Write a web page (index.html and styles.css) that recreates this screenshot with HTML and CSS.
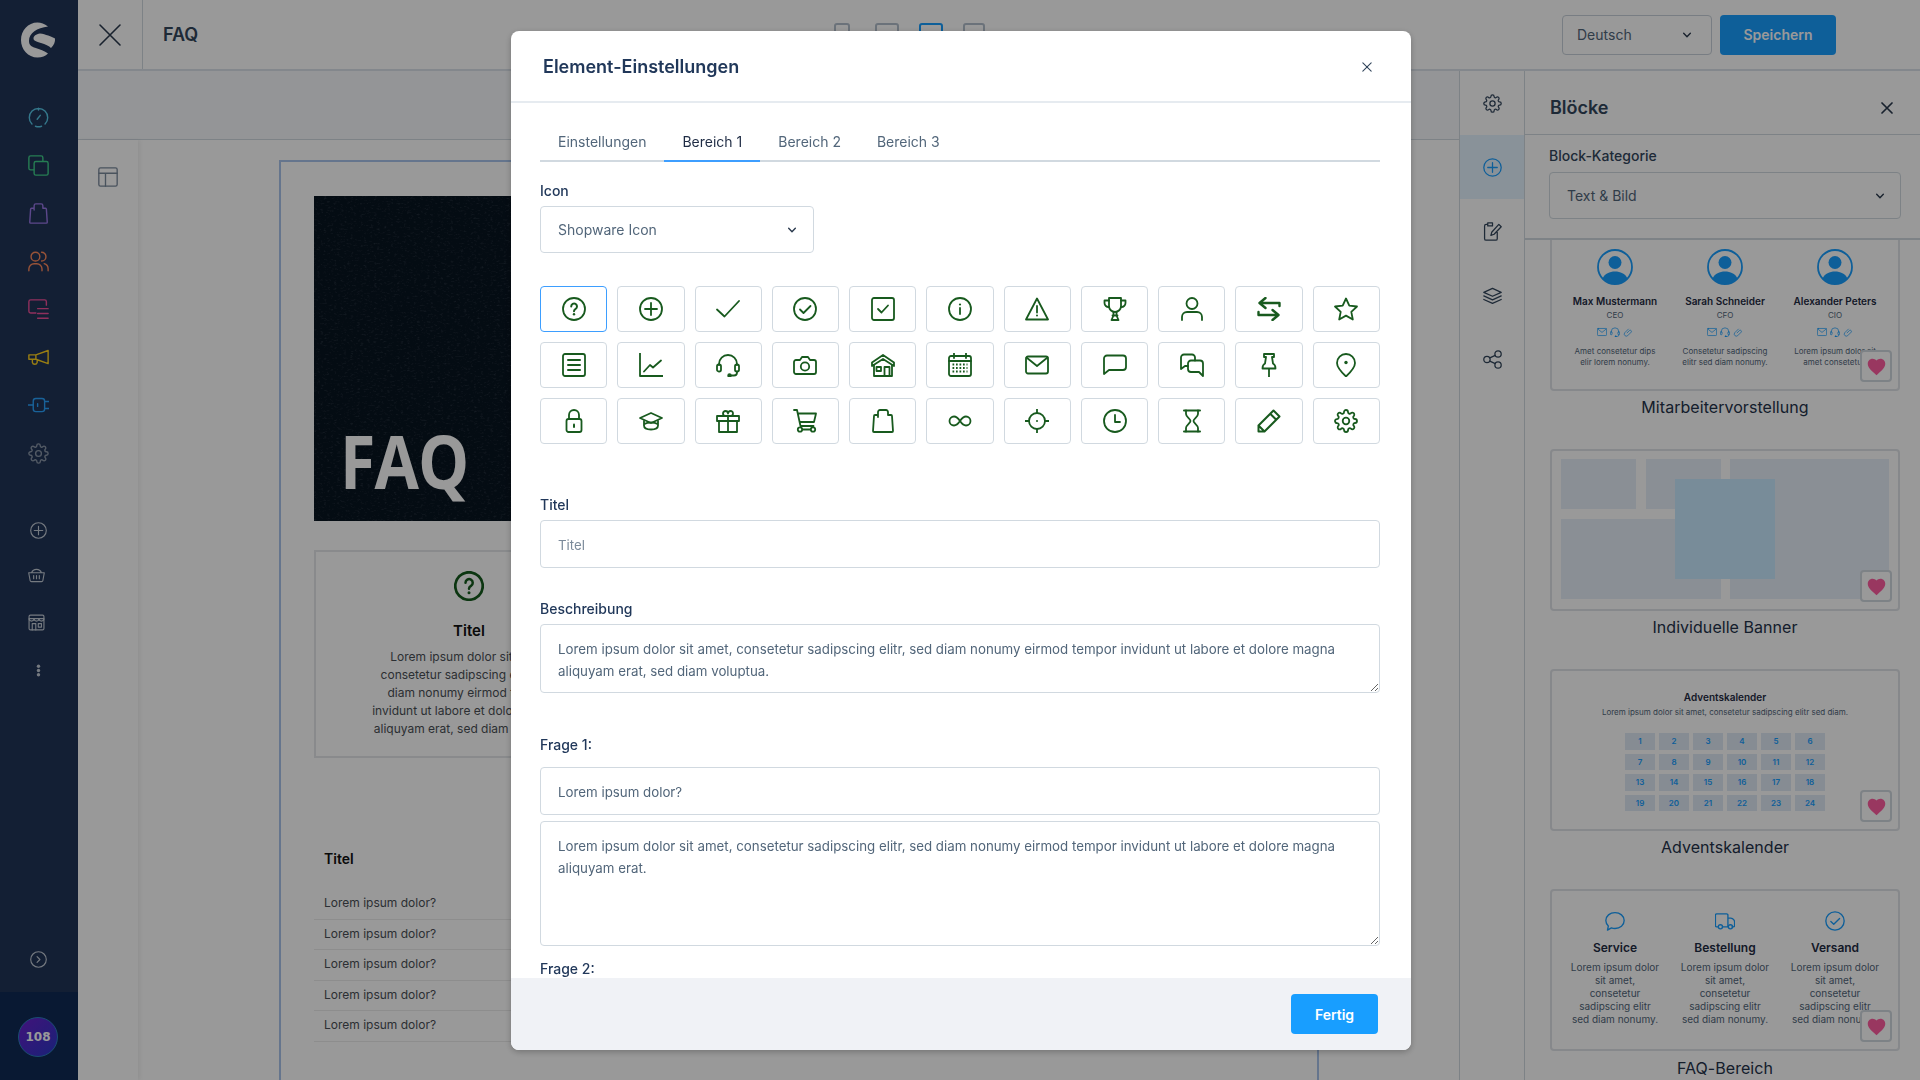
FILE: index.html
```html
<!doctype html>
<html lang="de">
<head>
<meta charset="utf-8">
<title>FAQ</title>
<link rel="stylesheet" href="styles.css">
</head>
<body>

<svg class="sprite" xmlns="http://www.w3.org/2000/svg">
	<symbol id="i-help" viewBox="0 0 24 24"><circle cx="12" cy="12" r="11"/><path stroke-width="2" d="M9.2 9.4a2.9 2.9 0 1 1 4.4 2.5c-1 .6-1.6 1.1-1.6 2.3"/><circle cx="12" cy="17.3" r="1.2" fill="currentColor" stroke="none"/></symbol>
	<symbol id="i-plus" viewBox="0 0 24 24"><circle cx="12" cy="12" r="11"/><path d="M12 6v12M6 12h12"/></symbol>
	<symbol id="i-check" viewBox="0 0 24 24"><path d="M1 12.5l7.5 7L23 4"/></symbol>
	<symbol id="i-check-circle" viewBox="0 0 24 24"><circle cx="12" cy="12" r="11"/><path d="M7 12.5l3.5 3.5L17.5 9"/></symbol>
	<symbol id="i-check-box" viewBox="0 0 24 24"><rect x="1" y="1" width="22" height="22" rx="2"/><path d="M7 12l3.5 3.5L17 8.5"/></symbol>
	<symbol id="i-info" viewBox="0 0 24 24"><circle cx="12" cy="12" r="11"/><path d="M12 11v6"/><circle cx="12" cy="7.5" r="1.1" fill="currentColor" stroke="none"/></symbol>
	<symbol id="i-warn" viewBox="0 0 24 24"><path d="M12 1.5L23 22.5H1z"/><path d="M12 9v6.5"/><circle cx="12" cy="18.5" r="1" fill="currentColor" stroke="none"/></symbol>
	<symbol id="i-trophy" viewBox="0 0 24 24"><path d="M6 1h12v8a6 6 0 0 1-12 0z"/><path d="M6 3.5H1.5V6a4 4 0 0 0 4.5 4M18 3.5h4.5V6a4 4 0 0 1-4.5 4"/><path d="M10.5 15v3.5L8.5 23h7l-2-4.5V15M9.500 18.500h5"/></symbol>
	<symbol id="i-user" viewBox="0 0 24 24"><circle cx="12" cy="6.5" r="5.500"/><path d="M2 23v-3a5 5 0 0 1 5-5h10a5 5 0 0 1 5 5v3"/></symbol>
	<symbol id="i-swap" viewBox="0 0 24 24"><path stroke-width="2.4" d="M22.5 9V6H3M8.5 1 2.5 6l6 5M1.5 15v3h19.5M15.5 13l6 5-6 5"/></symbol>
	<symbol id="i-star" viewBox="0 0 24 24"><path d="M12 1.500l3.300 7.100 7.700.9-5.700 5.300 1.500 7.700-6.800-3.900-6.800 3.900 1.500-7.700L1 9.500l7.700-.9z"/></symbol>
	<symbol id="i-text" viewBox="0 0 24 24"><rect x="1" y="1" width="22" height="22" rx="2"/><path stroke-width="2" d="M6 7h12M6 12h12M6 17h12"/></symbol>
	<symbol id="i-chart" viewBox="0 0 24 24"><path d="M1 0v23h23M5 18.500l6-6.500 3 2.500 8-7"/></symbol>
	<symbol id="i-headset" viewBox="0 0 24 24"><path d="M3 12v-1a9 9 0 0 1 18 0v1"/><rect x="1" y="11.500" width="4" height="7" rx="1.800"/><rect x="19" y="11.500" width="4" height="7" rx="1.800"/><path d="M21 18.500v1a3 3 0 0 1-3 3h-4"/><circle cx="13.500" cy="22.500" r="1.300" fill="currentColor"/></symbol>
	<symbol id="i-camera" viewBox="0 0 24 24"><path d="M1 9a2 2 0 0 1 2-2h4l2-3h6l2 3h4a2 2 0 0 1 2 2v10a2 2 0 0 1-2 2H3a2 2 0 0 1-2-2z"/><circle cx="12" cy="13.500" r="4.200"/></symbol>
	<symbol id="i-home" viewBox="0 0 24 24"><path d="M1 13V9.500L12 2l11 7.500V13L12 6z"/><path d="M3 12v11h18V12M13.500 23v-9h5v9"/><rect x="5.500" y="14" width="4.500" height="4"/></symbol>
	<symbol id="i-calendar" viewBox="0 0 24 24"><rect x="1" y="3" width="22" height="20" rx="2"/><path d="M1 8h22M6 0v5M18 0v5"/><path stroke-linecap="butt" stroke-dasharray="1.700 1.800" d="M4.500 11.500h15M4.500 15h15M4.500 18.500h15"/></symbol>
	<symbol id="i-mail" viewBox="0 0 24 24"><rect x="1" y="3.500" width="22" height="17" rx="2"/><path d="M1.500 4.500L12 13l10.500-8.500"/></symbol>
	<symbol id="i-chat" viewBox="0 0 24 24"><path d="M4 2.500h16a3 3 0 0 1 3 3V14a3 3 0 0 1-3 3H6l-5 4V5.500a3 3 0 0 1 3-3z"/></symbol>
	<symbol id="i-chats" viewBox="0 0 24 24"><path d="M15 7.500V4.500A3 3 0 0 0 12 1.500H4a3 3 0 0 0-3 3V16l4-3h3"/><path d="M11 7.500h9a3 3 0 0 1 3 3V23l-4-4h-8a3 3 0 0 1-3-3v-5.500a3 3 0 0 1 3-3z"/></symbol>
	<symbol id="i-pin" viewBox="0 0 24 24"><path d="M7 1h10v3h-2l1 6.500c2 1 2.500 2.500 2.500 5h-13c0-2.500.5-4 2.500-5L9 4H7zM12 15.500V24"/></symbol>
	<symbol id="i-marker" viewBox="0 0 24 24"><path d="M12 1a9 9 0 0 1 9 9c0 5-9 13.500-9 13.500S3 15 3 10a9 9 0 0 1 9-9z"/><circle cx="12" cy="9.500" r="1.700" fill="currentColor" stroke="none"/></symbol>
	<symbol id="i-lock" viewBox="0 0 24 24"><rect x="4.500" y="10" width="15" height="13" rx="2"/><path d="M7 10V6a5 5 0 0 1 10 0v4"/><path stroke-width="2" d="M12 15.500v2.500"/></symbol>
	<symbol id="i-grad" viewBox="0 0 24 24"><path d="M1 9l11-5 11 5-11 5z"/><path d="M5 12v4.500c0 2.500 3 4 7 4s7-1.500 7-4V12M5.500 15c1.500-1 4-1.500 6.500-1.500s5 .5 6.500 1.500"/></symbol>
	<symbol id="i-gift" viewBox="0 0 24 24"><rect x="1" y="7" width="22" height="5"/><path d="M3 12v11h18V12M12 7v16"/><path d="M12 7H9.500a2.500 2.500 0 1 1 2.500-2.500 2.500 2.500 0 1 1 2.500 2.500z"/></symbol>
	<symbol id="i-cart" viewBox="0 0 24 24"><path d="M1 1h3l3.500 16h13M5 4.500h18l-2 8.500H6.500"/><circle cx="7" cy="20.500" r="2.200"/><circle cx="20" cy="20.500" r="2.200"/><path d="M9.500 20.500h8"/></symbol>
	<symbol id="i-bag" viewBox="0 0 24 24"><path d="M7 6H4a1 1 0 0 0-1 1L2 22a1 1 0 0 0 1 1h18a1 1 0 0 0 1-1L21 7a1 1 0 0 0-1-1h-3V3a2 2 0 0 0-2-2H9a2 2 0 0 0-2 2v5"/></symbol>
	<symbol id="i-infinity" viewBox="0 0 24 24"><path d="M12 12c-2-3-3.800-4.500-6-4.500a4.500 4.500 0 0 0 0 9c2.200 0 4-1.500 6-4.500s3.800-4.500 6-4.500a4.500 4.500 0 0 1 0 9c-2.200 0-4-1.500-6-4.500z"/></symbol>
	<symbol id="i-target" viewBox="0 0 24 24"><circle cx="12" cy="12" r="8"/><path d="M12 0v4M12 20v4M0 12h4M20 12h4"/><circle cx="12" cy="12" r="1" fill="currentColor" stroke="none"/></symbol>
	<symbol id="i-clock" viewBox="0 0 24 24"><circle cx="12" cy="12" r="11"/><path d="M12 6v7h5"/></symbol>
	<symbol id="i-hour" viewBox="0 0 24 24"><path stroke-width="2" d="M4 1.500h16M4 22.500h16"/><path d="M6 1.500V5c0 3 4.500 5 4.500 7S6 16 6 19v3.500M18 1.500V5c0 3-4.500 5-4.500 7s4.500 4 4.500 7v3.500"/></symbol>
	<symbol id="i-pencil" viewBox="0 0 24 24"><path stroke-width="2" d="M1.500 16.500L16.500 1.500l6 6-15 15h-6zM13.500 5l5.500 5.500M1.500 16.500l6 6"/></symbol>
	<symbol id="i-gear" viewBox="0 0 24 24"><circle cx="12" cy="12" r="3.300"/><path d="M19.400 15a1.650 1.650 0 0 0 .33 1.820l.06.06a2 2 0 0 1 0 2.830 2 2 0 0 1-2.830 0l-.06-.06a1.650 1.650 0 0 0-1.820-.33 1.650 1.650 0 0 0-1 1.510V21a2 2 0 0 1-2 2 2 2 0 0 1-2-2v-.09A1.650 1.650 0 0 0 9 19.400a1.650 1.650 0 0 0-1.820.33l-.06.06a2 2 0 0 1-2.830 0 2 2 0 0 1 0-2.830l.06-.06a1.650 1.650 0 0 0 .33-1.820 1.650 1.650 0 0 0-1.510-1H3a2 2 0 0 1-2-2 2 2 0 0 1 2-2h.09A1.650 1.650 0 0 0 4.600 9a1.650 1.650 0 0 0-.33-1.820l-.06-.06a2 2 0 0 1 0-2.830 2 2 0 0 1 2.830 0l.06.06a1.650 1.650 0 0 0 1.820.33H9a1.650 1.650 0 0 0 1-1.510V3a2 2 0 0 1 2-2 2 2 0 0 1 2 2v.09a1.650 1.650 0 0 0 1 1.510 1.650 1.650 0 0 0 1.820-.33l.06-.06a2 2 0 0 1 2.830 0 2 2 0 0 1 0 2.830l-.06.06a1.650 1.650 0 0 0-.33 1.820V9a1.650 1.650 0 0 0 1.510 1H21a2 2 0 0 1 2 2 2 2 0 0 1-2 2h-.09a1.650 1.650 0 0 0-1.510 1z"/></symbol>
	<symbol id="i-close" viewBox="0 0 24 24"><path d="M2 2l20 20M22 2L2 22"/></symbol>
	<symbol id="i-chevron" viewBox="0 0 12 12"><path d="M2 4l4 4 4-4"/></symbol>

	<symbol id="i-gauge" viewBox="0 0 24 24"><path d="M4.500 19.500a10.500 10.500 0 1 1 15 0M8.500 22a10.500 10.500 0 0 0 7 0M10.500 14l3.500-4.500M12 1.500v2"/></symbol>
	<symbol id="i-boxes" viewBox="0 0 24 24"><rect x="1" y="1" width="16" height="16" rx="2"/><rect x="7" y="7.500" width="16" height="15.500" rx="2" fill="#213458"/></symbol>
	<symbol id="i-users" viewBox="0 0 24 24"><circle cx="8.500" cy="6.500" r="5"/><path d="M1 22.500v-2a6 6 0 0 1 6-6h3a6 6 0 0 1 6 6v2M15.500 1.500a5 5 0 0 1 0 10M18.500 14.500c2.800.8 4.500 3 4.500 6v2"/></symbol>
	<symbol id="i-orders" viewBox="0 0 24 24"><path d="M21 7V3a2 2 0 0 0-2-2H3a2 2 0 0 0-2 2v11a2 2 0 0 0 2 2h6M11 11h12M11 16.500h12M11 22h12"/></symbol>
	<symbol id="i-mega" viewBox="0 0 24 24"><path d="M1 9h8l14-5v15L9 14H1zM9 9v5M5 14v3.500a2.800 2.800 0 0 0 5.500 0V15"/></symbol>
	<symbol id="i-plug" viewBox="0 0 24 24"><rect x="6" y="4" width="13" height="15" rx="3"/><path d="M0 11.500h6M19 7.500h5M19 15.500h5M11 10v3"/></symbol>
	<symbol id="i-basket" viewBox="0 0 24 24"><path d="M1 9.500h22l-2 11a2 2 0 0 1-2 1.500H5a2 2 0 0 1-2-1.500zM5 9.500a7.500 7.500 0 0 1 14 0M8 13.500v4.500M12 13.500v4.500M16 13.500v4.500"/></symbol>
	<symbol id="i-store" viewBox="0 0 24 24"><rect x="1.500" y="1.500" width="21" height="21" rx="2"/><path d="M1.500 6.500h21M1.500 6.500a3.500 3.500 0 0 0 7 0 3.500 3.500 0 0 0 7 0 3.500 3.500 0 0 0 7 0M6 22.500v-9h5v9M14.500 13.500h4.500v5h-4.500z"/></symbol>
	<symbol id="i-dots" viewBox="0 0 24 24"><circle cx="12" cy="6" r="2.400" fill="currentColor" stroke="none"/><circle cx="12" cy="12" r="2.400" fill="currentColor" stroke="none"/><circle cx="12" cy="18" r="2.400" fill="currentColor" stroke="none"/></symbol>
	<symbol id="i-arrow-circle" viewBox="0 0 24 24"><circle cx="12" cy="12" r="11"/><path d="M10 8l4 4-4 4"/></symbol>
	<symbol id="i-layout" viewBox="0 0 24 24"><rect x="1" y="1" width="22" height="22" rx="2"/><path d="M1 7.500h22M9 7.500V23"/></symbol>
	<symbol id="i-note" viewBox="0 0 24 24"><path d="M18 13v8a2 2 0 0 1-2 2H4a2 2 0 0 1-2-2V5a2 2 0 0 1 2-2h2M6 1h6v4H6zM10 17l1-4 9-10 3 3-9 9.500z"/></symbol>
	<symbol id="i-layers" viewBox="0 0 24 24"><path d="M12 3L1 8l11 5 11-5zM1 12.500l11 5 11-5M1 17l11 5 11-5"/></symbol>
	<symbol id="i-share" viewBox="0 0 24 24"><circle cx="5" cy="12" r="4"/><circle cx="19" cy="5" r="4"/><circle cx="19" cy="19" r="4"/><path d="M8.500 10l7-3.200M8.500 14l7 3.200"/></symbol>
	<symbol id="i-heart" viewBox="0 0 24 24"><path fill="currentColor" stroke="none" d="M12 22l-1.500-1.400C5.400 16 2 12.800 2 8.800 2 5.600 4.400 3 7.500 3c1.700 0 3.400.8 4.500 2.200C13.100 3.800 14.800 3 16.500 3 19.600 3 22 5.600 22 8.800c0 4-3.400 7.200-8.500 11.800z"/></symbol>
	<symbol id="i-person" viewBox="0 0 36 36"><circle cx="18" cy="18" r="17" fill="none" stroke="currentColor" stroke-width="1.800"/><circle cx="18" cy="13.500" r="6.500" fill="currentColor" stroke="none"/><path fill="currentColor" stroke="none" d="M5.500 29.500C8 24.500 12.500 22.500 18 22.500s10 2 12.500 7C27.500 33 23 35 18 35S8.500 33 5.500 29.500z"/></symbol>
	<symbol id="i-link" viewBox="0 0 24 24"><path d="M10 14l6-6a3 3 0 0 1 4 4l-9 9a5 5 0 0 1-7-7l9-9"/></symbol>
	<symbol id="i-bubble" viewBox="0 0 24 24"><path d="M12 2c6.100 0 11 3.900 11 9.500S18.100 21 12 21c-1.500 0-3-.2-4.300-.7L3 23l1-5C2.200 16.300 1 14 1 11.500 1 5.900 5.900 2 12 2z"/></symbol>
	<symbol id="i-truck" viewBox="0 0 24 24"><path d="M4 19H2a1.500 1.500 0 0 1-1.500-1.500V5A1.500 1.500 0 0 1 2 3.500h12A1.500 1.500 0 0 1 15.500 5v14H9M15.500 8.500h3.500a5 5 0 0 1 4.500 5.500v3.500a1.500 1.500 0 0 1-1.500 1.500h-1.500M15 19h1"/><circle cx="6.500" cy="19" r="2.500"/><circle cx="18.500" cy="19" r="2.500"/></symbol>
</svg>

<div class="app">
	<nav class="nav">
		<div class="nav-top">
			<svg class="logo" viewBox="0 0 36 36"><path d="M28 4.500C24.500 1.800 21 .5 17.500.5 8 .5 1 8.500 1 18c0 9.500 7 17.500 16.500 17.500 4.500 0 8-1.500 10.500-4-3.500-2.500-8-4.200-13-5.700-4.500-1.400-6-3.300-6-7 0-8 8-12.800 19-14.300z"/><path d="M20 11.500c-4 .5-6.500 2.500-6.500 5 0 2.300 2.800 3 7.500 4.500 4.200 1.300 8.200 3 10 5 3-2.700 4.300-6 4-9.500-3.500-1.800-9.500-4.300-15-5z"/></svg>
			<svg class="nav-ic c-teal"><use href="#i-gauge"/></svg>
			<svg class="nav-ic c-green"><use href="#i-boxes"/></svg>
			<svg class="nav-ic c-purple"><use href="#i-bag"/></svg>
			<svg class="nav-ic c-orange"><use href="#i-users"/></svg>
			<svg class="nav-ic c-pink"><use href="#i-orders"/></svg>
			<svg class="nav-ic c-yellow"><use href="#i-mega"/></svg>
			<svg class="nav-ic c-blue"><use href="#i-plug"/></svg>
			<svg class="nav-ic c-gray"><use href="#i-gear"/></svg>
			<div class="nav-extra">
				<svg class="nav-sm"><use href="#i-plus"/></svg>
				<svg class="nav-sm nav-left"><use href="#i-basket"/></svg>
				<svg class="nav-sm nav-left"><use href="#i-store"/></svg>
				<svg class="nav-sm"><use href="#i-dots"/></svg>
			</div>
		</div>
		<div class="nav-collapse"><svg class="nav-sm"><use href="#i-arrow-circle"/></svg></div>
		<div class="nav-user"><div class="avatar">108</div></div>
	</nav>

	<div class="work">
		<header class="topbar">
			<div class="top-close"><svg class="ic ic-24"><use href="#i-close"/></svg></div>
			<div class="top-title">FAQ</div>
			<div class="devices">
				<span class="dev dev-a"></span>
				<span class="dev dev-b"></span>
				<span class="dev dev-c"></span>
				<span class="dev dev-d"></span>
			</div>
			<div class="top-select">Deutsch<svg class="chev"><use href="#i-chevron"/></svg></div>
			<div class="btn-save">Speichern</div>
		</header>

		<div class="body">
			<section class="editor">
				<div class="subbar"></div>
				<div class="stage">
					<div class="stage-rail"><svg class="ic ic-20"><use href="#i-layout"/></svg></div>
					<div class="canvas">
						<div class="page">
							<div class="hero">
								<svg class="hero-tex"><filter id="grain"><feTurbulence type="fractalNoise" baseFrequency="0.3 0.55" numOctaves="3" seed="4"/><feColorMatrix values="0 0 0 0 .5  0 0 0 0 .6  0 0 0 0 .7  1.1 0 0 0 -.6"/></filter><rect width="100%" height="100%" filter="url(#grain)" opacity=".35"/></svg>
								<span class="hero-text">FAQ</span>
							</div>
							<div class="info-card">
								<svg class="info-ic"><use href="#i-help"/></svg>
								<div class="info-title">Titel</div>
								<p class="info-text">Lorem ipsum dolor sit amet,<br>consetetur sadipscing elitr, sed<br>diam nonumy eirmod tempor<br>invidunt ut labore et dolore magna<br>aliquyam erat, sed diam voluptua.</p>
							</div>
							<div class="faq-list">
								<div class="faq-title">Titel</div>
								<div class="faq-row">Lorem ipsum dolor?</div>
								<div class="faq-row">Lorem ipsum dolor?</div>
								<div class="faq-row">Lorem ipsum dolor?</div>
								<div class="faq-row">Lorem ipsum dolor?</div>
								<div class="faq-row">Lorem ipsum dolor?</div>
							</div>
						</div>
					</div>
				</div>
			</section>

			<aside class="rail">
				<div class="rail-item"><svg class="ic ic-18"><use href="#i-gear"/></svg></div>
				<div class="rail-item is-active"><svg class="ic ic-18"><use href="#i-plus"/></svg></div>
				<div class="rail-item"><svg class="ic ic-18"><use href="#i-note"/></svg></div>
				<div class="rail-item"><svg class="ic ic-18"><use href="#i-layers"/></svg></div>
				<div class="rail-item"><svg class="ic ic-18"><use href="#i-share"/></svg></div>
			</aside>

			<aside class="panel">
				<div class="panel-head">
					<span class="panel-title">Blöcke</span>
					<svg class="panel-close"><use href="#i-close"/></svg>
				</div>
				<div class="panel-form">
					<div class="panel-label">Block-Kategorie</div>
					<div class="panel-select">Text &amp; Bild<svg class="chev"><use href="#i-chevron"/></svg></div>
				</div>
				<div class="blocks">
					<div class="block block-first">
						<div class="block-card team">
							<div class="member">
								<svg class="member-ic"><use href="#i-person"/></svg>
								<div class="member-name">Max Mustermann</div>
								<div class="member-role">CEO</div>
								<div class="member-links"><svg><use href="#i-mail"/></svg><svg><use href="#i-headset"/></svg><svg><use href="#i-link"/></svg></div>
								<p class="member-text">Amet consetetur dips<br>elir lorem nonumy.</p>
							</div>
							<div class="member">
								<svg class="member-ic"><use href="#i-person"/></svg>
								<div class="member-name">Sarah Schneider</div>
								<div class="member-role">CFO</div>
								<div class="member-links"><svg><use href="#i-mail"/></svg><svg><use href="#i-headset"/></svg><svg><use href="#i-link"/></svg></div>
								<p class="member-text">Consetetur sadipscing<br>elitr sed diam nonumy.</p>
							</div>
							<div class="member">
								<svg class="member-ic"><use href="#i-person"/></svg>
								<div class="member-name">Alexander Peters</div>
								<div class="member-role">CIO</div>
								<div class="member-links"><svg><use href="#i-mail"/></svg><svg><use href="#i-headset"/></svg><svg><use href="#i-link"/></svg></div>
								<p class="member-text">Lorem ipsum dolor sit<br>amet consetetur.</p>
							</div>
							<div class="fav"><svg><use href="#i-heart"/></svg></div>
						</div>
						<div class="block-name">Mitarbeitervorstellung</div>
					</div>

					<div class="block">
						<div class="block-card banners">
							<div class="banner-grid">
								<span class="banner"></span>
								<span class="banner"></span>
								<span class="banner banner-tall"></span>
								<span class="banner banner-wide"></span>
							</div>
							<span class="banner-top"></span>
							<div class="fav"><svg><use href="#i-heart"/></svg></div>
						</div>
						<div class="block-name">Individuelle Banner</div>
					</div>

					<div class="block">
						<div class="block-card advent">
							<div class="advent-title">Adventskalender</div>
							<div class="advent-sub">Lorem ipsum dolor sit amet, consetetur sadipscing elitr sed diam.</div>
							<div class="advent-grid">
								<span>1</span><span>2</span><span>3</span><span>4</span><span>5</span><span>6</span>
								<span>7</span><span>8</span><span>9</span><span>10</span><span>11</span><span>12</span>
								<span>13</span><span>14</span><span>15</span><span>16</span><span>17</span><span>18</span>
								<span>19</span><span>20</span><span>21</span><span>22</span><span>23</span><span>24</span>
							</div>
							<div class="fav"><svg><use href="#i-heart"/></svg></div>
						</div>
						<div class="block-name">Adventskalender</div>
					</div>

					<div class="block">
						<div class="block-card faqs">
							<div class="faq-col">
								<svg><use href="#i-bubble"/></svg>
								<div class="faq-col-title">Service</div>
								<p class="faq-col-text">Lorem ipsum dolor<br>sit amet,<br>consetetur<br>sadipscing elitr<br>sed diam nonumy.</p>
							</div>
							<div class="faq-col">
								<svg><use href="#i-truck"/></svg>
								<div class="faq-col-title">Bestellung</div>
								<p class="faq-col-text">Lorem ipsum dolor<br>sit amet,<br>consetetur<br>sadipscing elitr<br>sed diam nonumy.</p>
							</div>
							<div class="faq-col">
								<svg><use href="#i-check-circle"/></svg>
								<div class="faq-col-title">Versand</div>
								<p class="faq-col-text">Lorem ipsum dolor<br>sit amet,<br>consetetur<br>sadipscing elitr<br>sed diam nonumy.</p>
							</div>
							<div class="fav"><svg><use href="#i-heart"/></svg></div>
						</div>
						<div class="block-name block-name-last">FAQ-Bereich</div>
					</div>
				</div>
			</aside>
		</div>
	</div>
</div>

<div class="backdrop">
	<div class="modal">
		<div class="modal-head">
			<span class="modal-title">Element-Einstellungen</span>
			<svg class="modal-close"><use href="#i-close"/></svg>
		</div>
		<div class="modal-body">
			<div class="tabs">
				<span class="tab">Einstellungen</span>
				<span class="tab is-active">Bereich 1</span>
				<span class="tab">Bereich 2</span>
				<span class="tab">Bereich 3</span>
			</div>

			<label class="label label-icon">Icon</label>
			<div class="select">Shopware Icon<svg class="chev"><use href="#i-chevron"/></svg></div>

			<div class="icon-grid">
				<div class="icon-btn is-active"><svg><use href="#i-help"/></svg></div>
				<div class="icon-btn"><svg><use href="#i-plus"/></svg></div>
				<div class="icon-btn"><svg><use href="#i-check"/></svg></div>
				<div class="icon-btn"><svg><use href="#i-check-circle"/></svg></div>
				<div class="icon-btn"><svg><use href="#i-check-box"/></svg></div>
				<div class="icon-btn"><svg><use href="#i-info"/></svg></div>
				<div class="icon-btn"><svg><use href="#i-warn"/></svg></div>
				<div class="icon-btn"><svg><use href="#i-trophy"/></svg></div>
				<div class="icon-btn"><svg><use href="#i-user"/></svg></div>
				<div class="icon-btn"><svg><use href="#i-swap"/></svg></div>
				<div class="icon-btn"><svg><use href="#i-star"/></svg></div>

				<div class="icon-btn"><svg><use href="#i-text"/></svg></div>
				<div class="icon-btn"><svg><use href="#i-chart"/></svg></div>
				<div class="icon-btn"><svg><use href="#i-headset"/></svg></div>
				<div class="icon-btn"><svg><use href="#i-camera"/></svg></div>
				<div class="icon-btn"><svg><use href="#i-home"/></svg></div>
				<div class="icon-btn"><svg><use href="#i-calendar"/></svg></div>
				<div class="icon-btn"><svg><use href="#i-mail"/></svg></div>
				<div class="icon-btn"><svg><use href="#i-chat"/></svg></div>
				<div class="icon-btn"><svg><use href="#i-chats"/></svg></div>
				<div class="icon-btn"><svg><use href="#i-pin"/></svg></div>
				<div class="icon-btn"><svg><use href="#i-marker"/></svg></div>

				<div class="icon-btn"><svg><use href="#i-lock"/></svg></div>
				<div class="icon-btn"><svg><use href="#i-grad"/></svg></div>
				<div class="icon-btn"><svg><use href="#i-gift"/></svg></div>
				<div class="icon-btn"><svg><use href="#i-cart"/></svg></div>
				<div class="icon-btn"><svg><use href="#i-bag"/></svg></div>
				<div class="icon-btn"><svg><use href="#i-infinity"/></svg></div>
				<div class="icon-btn"><svg><use href="#i-target"/></svg></div>
				<div class="icon-btn"><svg><use href="#i-clock"/></svg></div>
				<div class="icon-btn"><svg><use href="#i-hour"/></svg></div>
				<div class="icon-btn"><svg><use href="#i-pencil"/></svg></div>
				<div class="icon-btn"><svg><use href="#i-gear"/></svg></div>
			</div>

			<label class="label label-titel">Titel</label>
			<input class="input" type="text" placeholder="Titel">

			<label class="label label-desc">Beschreibung</label>
			<textarea class="area area-desc">Lorem ipsum dolor sit amet, consetetur sadipscing elitr, sed diam nonumy eirmod tempor invidunt ut labore et dolore magna aliquyam erat, sed diam voluptua.</textarea>

			<label class="label label-q1">Frage 1:</label>
			<input class="input" type="text" value="Lorem ipsum dolor?">
			<textarea class="area area-answer">Lorem ipsum dolor sit amet, consetetur sadipscing elitr, sed diam nonumy eirmod tempor invidunt ut labore et dolore magna aliquyam erat.</textarea>

			<label class="label label-q2">Frage 2:</label>
		</div>
		<div class="modal-foot"><span class="btn-done">Fertig</span></div>
	</div>
</div>

</body>
</html>
```

FILE: styles.css
```css
* { box-sizing: border-box; margin: 0; padding: 0; }
html, body { height: 100%; overflow: hidden; }
body { font-family: Inter, "Noto Sans", sans-serif; font-size: 14px; color: #2b3a4e; background: #fff; }
svg { display: block; }
.sprite { display: none; }

.ic, .chev, .nav-ic, .nav-sm, .modal-close, .panel-close, .icon-btn svg, .info-ic, .member-links svg, .faq-col svg {
	fill: none; stroke: currentColor; stroke-width: 1.6; stroke-linecap: round; stroke-linejoin: round;
}
.ic-24 { width: 24px; height: 24px; }
.ic-20 { width: 20px; height: 20px; }
.ic-18 { width: 19px; height: 19px; }
.chev { width: 10px; height: 10px; stroke-width: 1.7; color: #2b3a4e; }

.app { display: flex; height: 100vh; overflow: hidden; }

/* sidebar */
.nav { width: 78px; flex: none; background: #213458; display: flex; flex-direction: column; }
.nav-top { flex: 1; display: flex; flex-direction: column; align-items: center; padding: 22px 2px 0 0; }
.logo { width: 36px; height: 36px; fill: #fff; margin-bottom: 49px; }
.nav-ic { width: 21px; height: 21px; margin-bottom: 27px; }
.c-teal { color: #58c8e8; }
.c-green { color: #3fd08a; }
.c-purple { color: #9a78e8; }
.c-orange { color: #ff8a5c; }
.c-pink { color: #f0509a; }
.c-yellow { color: #ffd21f; }
.c-blue { color: #2aa4ff; }
.c-gray { color: #8a97a8; }
.nav-extra { display: flex; flex-direction: column; align-items: center; gap: 31px; margin-top: 31px; }
.nav-sm { width: 17px; height: 17px; color: #c4ccd6; }
.nav-left { margin-right: 4px; }
.nav-extra .nav-left:nth-child(2) { margin-top: -4px; }
.nav-collapse { height: 65px; display: flex; justify-content: center; padding: 24px 2px 0 0; }
.nav-user { height: 88px; background: #0f2b55; display: flex; justify-content: center; padding: 25px 2px 0 0; }
.avatar { width: 40px; height: 40px; border-radius: 50%; background: linear-gradient(135deg, #6c20cc, #2a38c8); border: 1px solid #2d7fc0; color: #fff; font: 700 12px/38px "DejaVu Sans", sans-serif; text-align: center; }

.work { flex: 1; min-width: 0; display: flex; flex-direction: column; }

/* top bar */
.topbar { height: 71px; flex: none; display: flex; align-items: center; border-bottom: 2px solid #dbe2ea; padding-right: 84px; }
.top-close { width: 65px; height: 100%; display: flex; align-items: center; justify-content: center; border-right: 1px solid #d1d9e0; color: #2b3a4e; }
.top-title { width: 691px; padding-left: 20px; font-size: 18px; font-weight: 600; color: #33465c; }
.devices { display: flex; align-items: center; gap: 20px; }
.dev { display: block; height: 24px; border: 2px solid #b3bfcc; border-radius: 3px; }
.dev-a { width: 16px; margin-right: 5px; }
.dev-b { width: 24px; }
.dev-c { width: 24px; border-color: #189eff; }
.dev-d { width: 22px; }
.top-select { width: 150px; height: 40px; margin-left: auto; display: flex; align-items: center; justify-content: space-between; padding: 0 19px 0 14px; border: 1px solid #c8d1da; border-radius: 4px; color: #52667a; }
.btn-save { width: 116px; height: 40px; margin-left: 8px; background: #189eff; border-radius: 4px; color: #fff; font-weight: 600; display: flex; align-items: center; justify-content: center; }

.body { flex: 1; min-height: 0; display: flex; }

/* editor */
.editor { flex: 1; min-width: 0; display: flex; flex-direction: column; }
.subbar { height: 69px; flex: none; background: #f7f9fc; border-bottom: 1px solid #d1d9e0; }
.stage { flex: 1; min-height: 0; display: flex; }
.stage-rail { width: 60px; flex: none; display: flex; justify-content: center; padding-top: 27px; color: #7a8a9c; box-shadow: 2px 0 4px rgba(0,0,0,.06); }
.canvas { flex: 1; min-width: 0; padding: 20px 0 0 141px; overflow: hidden; }
.page { width: 1040px; height: 1100px; border: 2px solid #a8c4ec; border-bottom: 0; padding: 34px 33px 0; }
.hero { position: relative; height: 325px; background: #081420; display: flex; align-items: flex-end; padding: 0 0 15px 26px; overflow: hidden; }
.hero-tex { position: absolute; top: 0; left: 0; width: 100%; height: 100%; }
.hero-text { position: relative; font: 700 74px/90px "Open Sans", sans-serif; color: #fff; letter-spacing: -1px; transform: scaleX(.87); transform-origin: left center; }
.info-card { width: 310px; height: 208px; margin-top: 29px; border: 2px solid #e4e7ea; padding-top: 19px; display: flex; flex-direction: column; align-items: center; }
.info-ic { width: 30px; height: 30px; color: #155a1d; stroke-width: 2.2; }
.info-title { margin-top: 21px; font-size: 15px; line-height: 18px; font-weight: 600; color: #111; }
.info-text { margin-top: 8px; font-size: 12px; line-height: 18px; text-align: center; color: #4a4f55; white-space: nowrap; }
.faq-list { margin-top: 91px; }
.faq-title { padding-left: 10px; font-size: 14px; line-height: 20px; font-weight: 600; color: #111; margin-bottom: 20px; }
.faq-row { height: 30.5px; padding-left: 10px; font-size: 12px; line-height: 28px; color: #4a4f55; border-bottom: 1px solid #ebebeb; }

/* right rail */
.rail { width: 66px; flex: none; border-left: 1px solid #d1d9e0; border-right: 1px solid #d1d9e0; }
.rail-item { height: 64px; display: flex; align-items: center; justify-content: center; color: #33465c; }
.rail-item.is-active { background: #e5f3ff; color: #189eff; }

/* blocks panel */
.panel { width: 395px; flex: none; display: flex; flex-direction: column; min-height: 0; }
.panel-head { height: 64px; flex: none; display: flex; align-items: center; justify-content: space-between; padding: 10px 27px 0 25px; border-bottom: 1px solid #d1d9e0; }
.panel-title { font-size: 18px; font-weight: 600; color: #33465c; }
.panel-close { width: 12px; height: 12px; stroke-width: 3.4; color: #2b3a4e; }
.panel-form { height: 105px; flex: none; padding: 12px 19px 0 24px; border-bottom: 2px solid #d1d9e0; }
.panel-label { font-size: 14px; line-height: 18px; font-weight: 500; color: #33465c; }
.panel-select { margin-top: 7px; height: 47px; display: flex; align-items: center; justify-content: space-between; padding: 0 15px 0 17px; border: 1px solid #d1d9e0; border-radius: 4px; color: #52667a; }
.blocks { flex: 1; min-height: 0; overflow: hidden; padding-left: 25px; }
.block { height: 220px; }
.block-first { margin-top: -11px; }
.block-card { position: relative; width: 350px; height: 162px; border: 2px solid #dfe3e8; border-radius: 4px; background: #fff; }
.block-name { text-align: center; width: 350px; margin-top: 4px; font-size: 16px; line-height: 24px; color: #24324a; letter-spacing: .05px; }
.block-name-last { margin-top: 5px; }
.fav { position: absolute; right: 6px; bottom: 7px; width: 32px; height: 32px; border: 2px solid #d1d9e0; border-radius: 4px; background: #fff; display: flex; align-items: center; justify-content: center; color: #ff5ca0; }
.fav svg { width: 21px; height: 21px; }

.team { display: flex; padding: 18px 8px 0; }
.member { flex: 1; display: flex; flex-direction: column; align-items: center; text-align: center; white-space: nowrap; min-width: 0; }
.member-ic { width: 36px; height: 36px; color: #189eff; }
.member-name { margin-top: 9px; font-size: 10px; line-height: 14px; font-weight: 600; color: #1f2c44; }
.member-role { font-size: 8px; line-height: 12px; margin-top: 1px; color: #52667a; }
.member-links { display: flex; gap: 3px; margin-top: 6px; color: #189eff; }
.member-links svg { width: 10px; height: 10px; stroke-width: 1.7; }
.member-text { margin-top: 9px; font-size: 8px; line-height: 10.5px; color: #52667a; }

.banners { padding: 8px 9px; }
.banner-grid { display: grid; grid-template-columns: 75px 75px 159px; grid-template-rows: 50px 80px; gap: 10px 9.5px; }
.banner { background: #e6eef8; }
.banner-tall { grid-row: 1 / span 2; grid-column: 3; }
.banner-wide { grid-column: 1 / span 2; }
.banner-top { position: absolute; left: 123px; top: 28px; width: 100px; height: 100px; background: #c9e9ff; }

.advent { display: flex; flex-direction: column; align-items: center; padding-top: 19px; }
.advent-title { font-size: 10px; line-height: 14px; font-weight: 600; color: #1f2c44; }
.advent-sub { font-size: 8px; line-height: 12px; margin-top: 2px; color: #52667a; }
.advent-grid { display: grid; grid-template-columns: repeat(6, 30px); grid-auto-rows: 16.5px; gap: 4px; margin-top: 15px; }
.advent-grid span { background: #dfe9f5; color: #189eff; font-size: 8px; line-height: 16.5px; font-weight: 600; text-align: center; }

.faqs { display: flex; padding: 20px 8px 0; }
.faq-col { flex: 1; display: flex; flex-direction: column; align-items: center; text-align: center; color: #189eff; min-width: 0; }
.faq-col svg { width: 20px; height: 20px; }
.faq-col-title { margin-top: 9px; font-size: 12px; line-height: 16px; font-weight: 600; color: #1f2c44; }
.faq-col-text { margin-top: 5px; font-size: 10px; line-height: 13px; color: #52667a; white-space: nowrap; }

/* modal */
.backdrop { position: fixed; top: 0; left: 0; right: 0; bottom: 0; background: rgba(0,0,0,.4); display: flex; justify-content: center; align-items: flex-start; padding: 31px 0 0 2px; }
.modal { width: 900px; height: 1019px; background: #fff; border-radius: 8px; box-shadow: 0 2px 6px rgba(0,0,0,.25); display: flex; flex-direction: column; overflow: hidden; color: #52667a; }
.modal-head { height: 72px; flex: none; display: flex; align-items: center; justify-content: space-between; padding: 2px 39px 0 32px; border-bottom: 2px solid #e6ebf0; }
.modal-title { font-size: 18px; font-weight: 600; color: #21385a; margin-top: -2px; }
.modal-close { width: 10px; height: 10px; color: #33465c; stroke-width: 2.6; }
.modal-body { flex: 1; min-height: 0; overflow: hidden; padding: 22px 31px 0 29px; }

.tabs { display: flex; height: 37px; border-bottom: 2px solid #d1d9e0; }
.tab { height: 37px; padding: 0 18px; line-height: 33px; color: #52667a; border-bottom: 2px solid transparent; }
.tab.is-active { color: #1f2c44; border-bottom-color: #3d9eff; }

.label { display: block; font-size: 14px; line-height: 18px; font-weight: 500; color: #21385a; margin-bottom: 6px; }
.label-icon { margin-top: 20px; }
.label-titel { margin-top: 52px; }
.label-desc { margin-top: 32px; }
.label-q1 { margin-top: 43px; margin-bottom: 13px; }
.label-q2 { margin-top: 14px; }

.select { width: 274px; height: 47px; display: flex; align-items: center; justify-content: space-between; padding: 0 16px 0 17px; border: 1px solid #d1d9e0; border-radius: 4px; color: #52667a; }

.icon-grid { display: grid; grid-template-columns: repeat(11, 1fr); grid-auto-rows: 46px; gap: 10px; margin-top: 33px; color: #185a1e; }
.icon-btn { display: flex; align-items: center; justify-content: center; border: 1px solid #d1d9e0; border-radius: 4px; }
.icon-btn.is-active { border-color: #3d9eff; }
.icon-btn svg { width: 24px; height: 24px; stroke-width: 1.8; }

.input, .area { display: block; width: 100%; border: 1px solid #d1d9e0; border-radius: 4px; background: #fff; font-family: Inter, "Noto Sans", sans-serif; font-size: 13.3px; color: #52667a; outline: none; }
.input { height: 48px; padding: 1px 17px 0; }
.input::placeholder { color: #7b8a9a; opacity: 1; }
.area { padding: 13px 17px; line-height: 22px; resize: both; }
.area-desc { height: 69px; overflow: hidden; }
.area-answer { height: 125px; margin-top: 6px; overflow: hidden; }

.modal-foot { height: 72px; flex: none; background: #f0f2f6; display: flex; justify-content: flex-end; padding: 16px 33px 0 0; }
.btn-done { width: 87px; height: 40px; background: #189eff; border-radius: 4px; color: #fff; font-weight: 600; display: flex; align-items: center; justify-content: center; }
```
